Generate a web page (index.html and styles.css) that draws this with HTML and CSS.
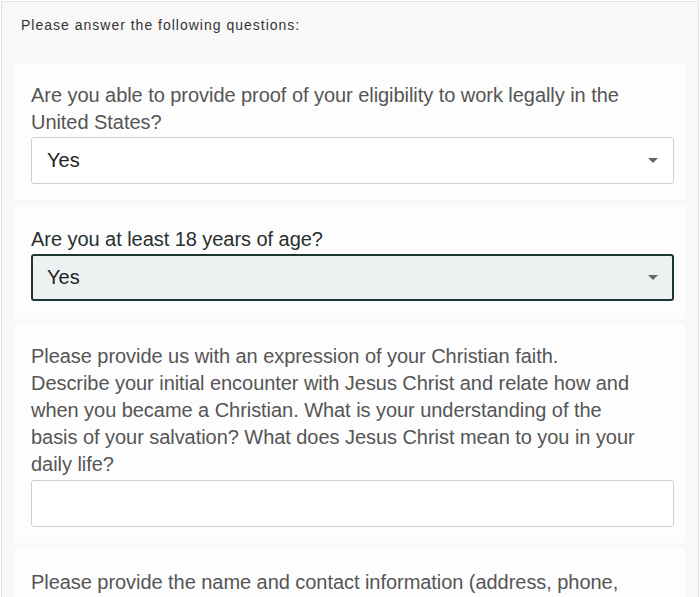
FILE: index.html
```
<!DOCTYPE html>
<html lang="en">
<head>
<meta charset="utf-8">
<title>Questions</title>
<link rel="stylesheet" href="styles.css">
</head>
<body>
<div class="frame">
  <div class="intro">Please answer the following questions:</div>
  <div class="cards">
    <div class="card">
      <div class="label">Are you able to provide proof of your eligibility to work legally in the United States?</div>
      <div class="select">
        <span class="value">Yes</span>
        <span class="caret"></span>
      </div>
    </div>
    <div class="card card-age">
      <div class="label label-dark">Are you at least 18 years of age?</div>
      <div class="select select-focus">
        <span class="value">Yes</span>
        <span class="caret"></span>
      </div>
    </div>
    <div class="card">
      <div class="label">Please provide us with an expression of your Christian faith. Describe your initial encounter with Jesus Christ and relate how and when you became a Christian. What is your understanding of the basis of your salvation? What does Jesus Christ mean to you in your daily life?</div>
      <div class="textbox"></div>
    </div>
    <div class="card card-last">
      <div class="label">Please provide the name and contact information (address, phone, email) of your pastor.</div>
      <div class="textbox"></div>
    </div>
  </div>
</div>
</body>
</html>
```
FILE: styles.css
```
html, body {
  margin: 0;
  padding: 0;
  background: #ffffff;
  overflow: hidden;
}
body {
  font-family: "Liberation Sans", Arial, sans-serif;
}
.frame {
  margin: 1px 1px 0 1px;
  border: 1px solid #e2e2e2;
  border-bottom: none;
  background: #f8f8f8;
  height: 700px;
  box-sizing: border-box;
}
.intro {
  font-size: 14px;
  letter-spacing: 1px;
  color: #333;
  padding: 15px 0 0 19px;
  height: 61px;
  box-sizing: border-box;
}
.cards {
  display: flex;
  flex-direction: column;
  gap: 5px;
  padding: 0 13px 0 12px;
}
.card {
  background: #fdfdfd;
  padding: 19px 11px 16px 17px;
}
.card-age {
  padding-top: 21px;
  padding-bottom: 18px;
}
.card-last {
  padding-top: 21px;
}
.label {
  font-size: 20px;
  line-height: 27px;
  letter-spacing: -0.05px;
  color: #555;
  margin-bottom: 1px;
  padding-right: 36px;
}
.label-dark {
  color: #26302f;
}
.select {
  height: 47px;
  box-sizing: border-box;
  border: 1px solid #cfcfcf;
  border-radius: 3px;
  background: #fff;
  display: flex;
  align-items: center;
  justify-content: space-between;
  padding: 0 15px 0 15px;
}
.select-focus {
  border: 2px solid #1c3535;
  background: #eef1f1;
  padding: 0 14px 0 14px;
}
.value {
  font-size: 20px;
  color: #222;
}
.caret {
  width: 0;
  height: 0;
  border-left: 5px solid transparent;
  border-right: 5px solid transparent;
  border-top: 5px solid #666;
}
.textbox {
  height: 47px;
  box-sizing: border-box;
  border: 1px solid #cfcfcf;
  border-radius: 3px;
  background: #fff;
  margin-top: 2px;
}
```
